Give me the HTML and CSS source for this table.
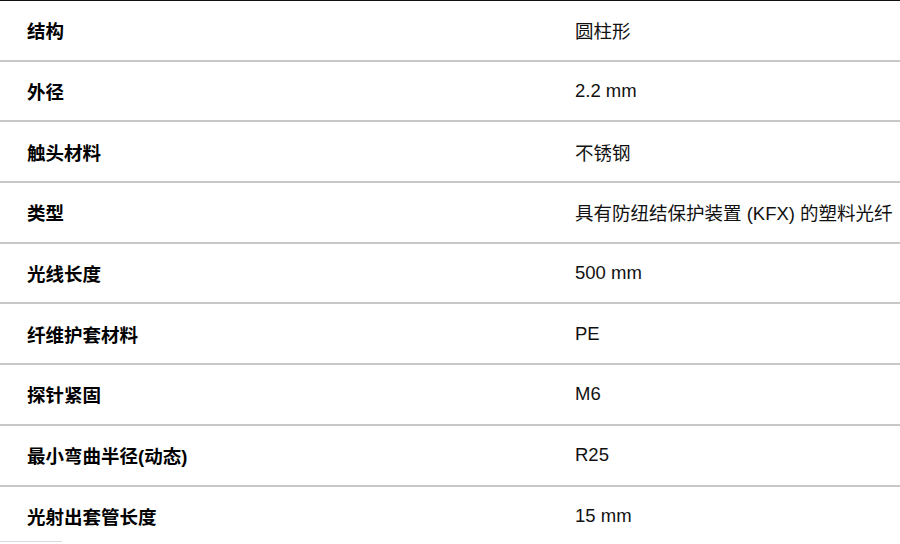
FILE: index.html
```html
<!DOCTYPE html>
<html lang="zh-CN">
<head>
<meta charset="utf-8">
<title>规格</title>
<link rel="stylesheet" href="styles.css">
</head>
<body>
<div class="specs">
  <div class="row"><div class="label">结构</div><div class="value">圆柱形</div></div>
  <div class="row"><div class="label">外径</div><div class="value">2.2 mm</div></div>
  <div class="row"><div class="label">触头材料</div><div class="value">不锈钢</div></div>
  <div class="row"><div class="label">类型</div><div class="value">具有防纽结保护装置 (KFX) 的塑料光纤</div></div>
  <div class="row"><div class="label">光线长度</div><div class="value">500 mm</div></div>
  <div class="row"><div class="label">纤维护套材料</div><div class="value">PE</div></div>
  <div class="row"><div class="label">探针紧固</div><div class="value">M6</div></div>
  <div class="row"><div class="label">最小弯曲半径(动态)</div><div class="value">R25</div></div>
  <div class="row"><div class="label">光射出套管长度</div><div class="value">15 mm</div></div>
</div>
<div class="hscroll"></div>
</body>
</html>
```
FILE: styles.css
```css
html, body {
  margin: 0;
  padding: 0;
  background: #fff;
}
body {
  position: relative;
  height: 544px;
  overflow: hidden;
  font-family: "Liberation Sans", "Noto Sans CJK SC", sans-serif;
  font-size: 18.5px;
  color: #111;
}
.specs {
  border-top: 1px solid #111;
}
.row {
  display: grid;
  grid-template-columns: 548px 1fr;
  align-items: center;
  height: 58.7px;
  border-bottom: 2px solid #c8c8c8;
}
.label {
  padding-left: 27px;
  font-weight: bold;
  color: #000;
}
.value {
  padding-left: 27px;
  color: #111;
}
.hscroll {
  position: absolute;
  left: 0;
  top: 541px;
  width: 62px;
  height: 1px;
  background: #d6dbe3;
}
```
